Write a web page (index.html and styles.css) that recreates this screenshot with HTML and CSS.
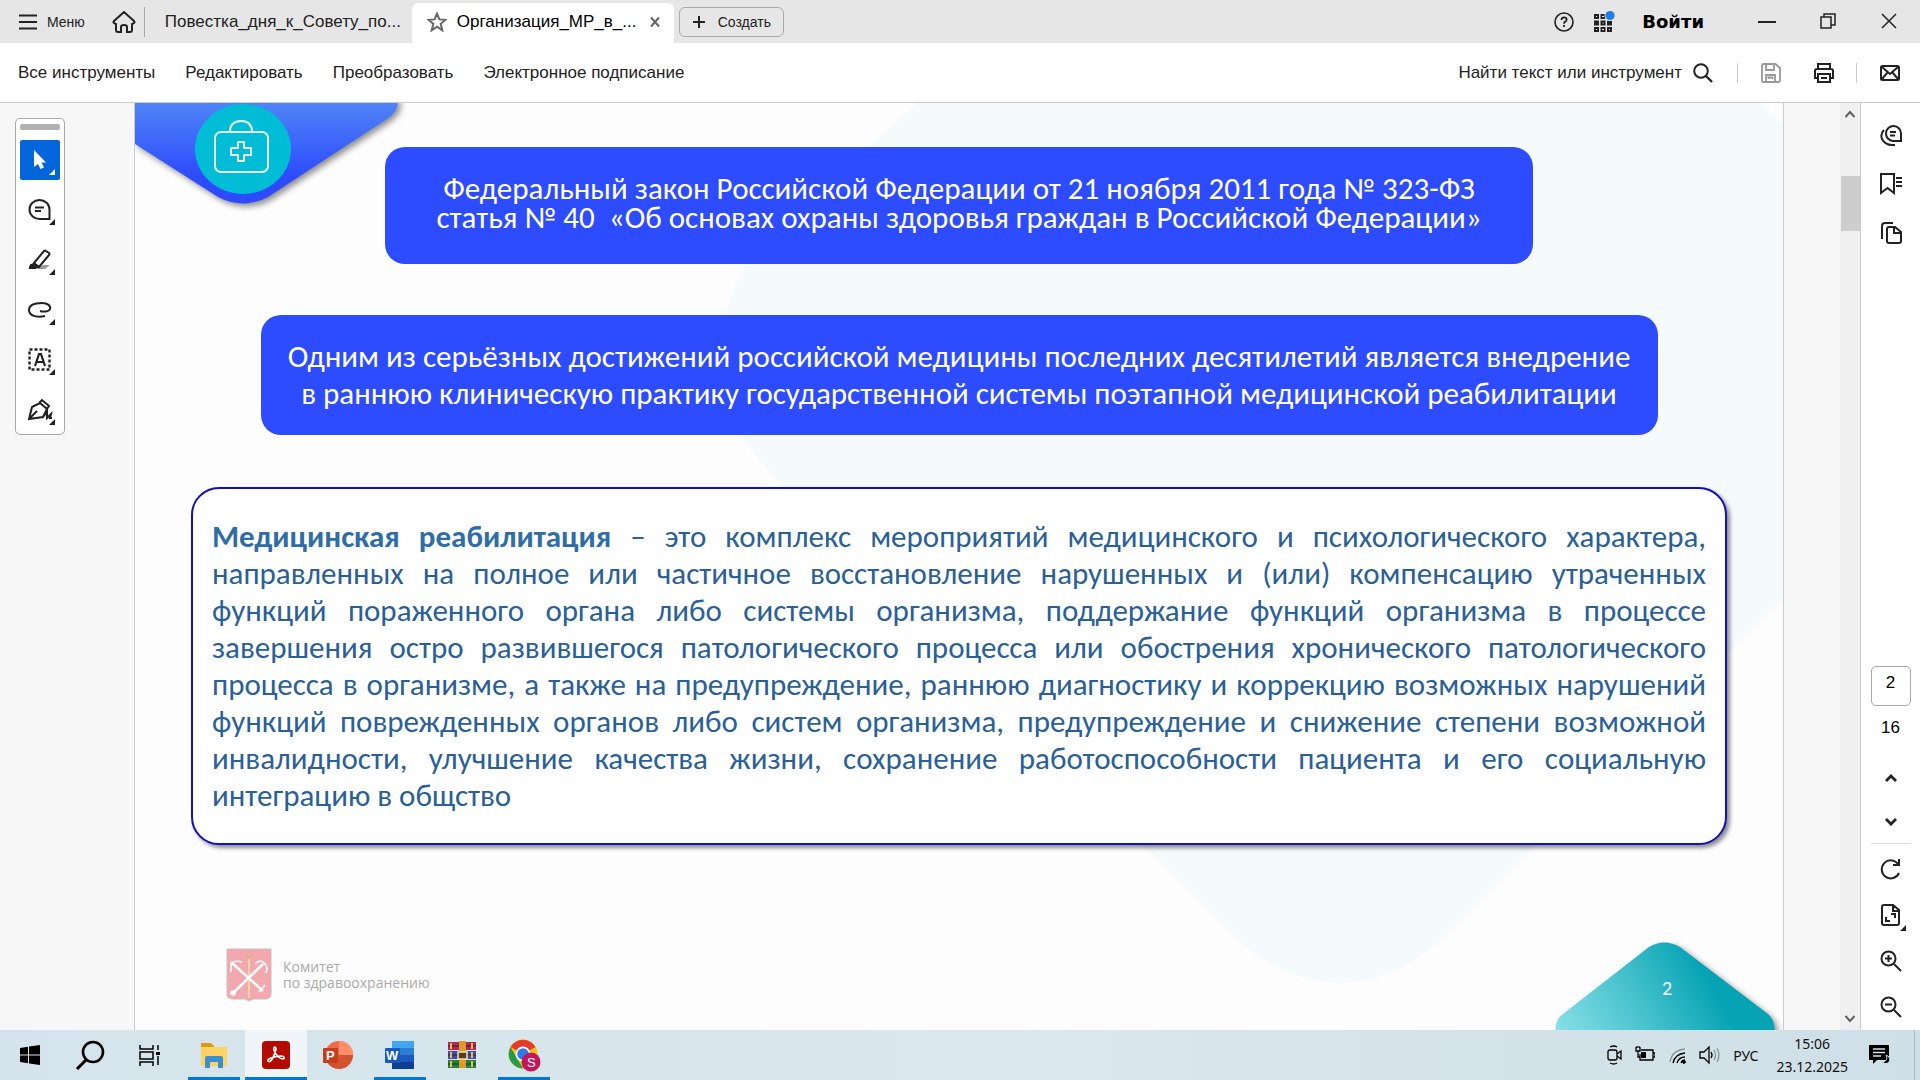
FILE: index.html
```html
<!DOCTYPE html>
<html lang="ru">
<head>
<meta charset="utf-8">
<title>Организация_МР_в_...</title>
<link rel="stylesheet" href="styles.css">
</head>
<body>
<header class="tabbar">
  <button class="menu-btn"><svg class="i18" viewBox="0 0 18 18"><path d="M0 2.500h18M0 9h18M0 15.500h18" stroke-width="2"/></svg>Меню</button>
  <button class="home-btn" aria-label="Главная"><svg class="i24" viewBox="0 0 24 24"><path d="M12 2 2 11q-1 1 0 2l2 1v6q0 2 2 2h3v-5q0-2 3-2t3 2v5h3q2 0 2-2v-6l2-1q1-1 0-2z" stroke-width="2"/></svg></button>
  <a class="tab" href="#agenda">Повестка_дня_к_Совету_по...</a>
  <div class="tab tab-active"><svg class="i20 star" viewBox="0 0 20 20"><path d="m10 1.500 2.300 5.900 6.200.4-4.800 4 1.600 6.500L10 14.700l-5.300 3.600 1.600-6.500-4.800-4 6.200-.4z" stroke-width="2"/></svg><span>Организация_МР_в_...</span><button class="tab-close" aria-label="Закрыть вкладку"><svg class="i12" viewBox="0 0 12 12"><path d="m2 1.500 8 9m0-9-8 9" stroke-width="2"/></svg></button></div>
  <button class="create-btn"><svg class="i14" viewBox="0 0 14 14"><path d="M7 1v12M1 7h12" stroke-width="2"/></svg>Создать</button>
  <div class="window-tools">
    <button aria-label="Справка"><svg class="i20" viewBox="0 0 20 20"><circle cx="10" cy="10" r="9" stroke-width="1.600"/><path d="M7.500 8q0-2.600 2.600-2.600t2.500 2.300q0 1.500-1.600 2.200-1 .5-1 1.800M10 13v2" stroke-width="1.800"/></svg></button>
    <button aria-label="Приложения"><svg class="i24" viewBox="0 0 24 24"><g stroke-width="2"><rect x="3" y="5" width="3" height="3"/><rect x="9.500" y="5" width="3" height="3"/><rect x="3" y="11.500" width="3" height="3"/><rect x="9.500" y="11.500" width="3" height="3"/><rect x="16" y="11.500" width="3" height="3"/><rect x="3" y="18" width="3" height="3"/><rect x="9.500" y="18" width="3" height="3"/><rect x="16" y="18" width="3" height="3"/></g><circle cx="18" cy="5.500" r="5.500" fill="#e6e6e6" stroke="none"/><circle cx="18" cy="5.500" r="4.600" fill="#1f7fe8" stroke="none"/></svg></button>
    <button class="signin">Войти</button>
  </div>
  <div class="window-controls">
    <button aria-label="Свернуть"><svg class="i18" viewBox="0 0 18 18"><path d="M0 10h18" stroke-width="2"/></svg></button>
    <button aria-label="Восстановить"><svg class="i18" viewBox="0 0 18 18"><path d="M2 5h10v11H2zM5 5V2h11v11h-4" stroke-width="1.500"/></svg></button>
    <button aria-label="Закрыть"><svg class="i18" viewBox="0 0 18 18"><path d="m2 2 14 14M16 2 2 16" stroke-width="1.500"/></svg></button>
  </div>
</header>

<nav class="toolbar">
  <a href="#tools">Все инструменты</a>
  <a href="#edit">Редактировать</a>
  <a href="#convert">Преобразовать</a>
  <a href="#sign">Электронное подписание</a>
  <button class="find">Найти текст или инструмент <svg class="i20" viewBox="0 0 20 20"><circle cx="8" cy="8" r="6.800" stroke-width="2"/><path d="m13 13 6 6" stroke-width="2.400"/></svg></button>
  <div class="file-tools">
    <button class="muted" aria-label="Сохранить"><svg class="i20" viewBox="0 0 20 20"><path d="M2.500 1h12L19 5v12.500q0 1.500-1.500 1.500h-15Q1 19 1 17.500v-15Q1 1 2.500 1zM5 1v6h8V1M5 19v-7h9v7M7.500 16v-1.500h4V16" stroke-width="1.800"/></svg></button>
    <button aria-label="Печать"><svg class="i22" viewBox="0 0 22 22"><path d="M5 7V2h12v5M5 16H2V9q0-2 2-2h14q2 0 2 2v7h-3M5 12h12v8H5zM8 16h6" stroke-width="2"/></svg></button>
    <button aria-label="Отправить"><svg class="i22" viewBox="0 0 22 22"><rect x="2" y="4" width="18" height="14" rx="1.500" stroke-width="2"/><path d="m3 5 8 7 8-7M3 17l5.500-6.500M19 17l-5.500-6.500" stroke-width="2"/></svg></button>
  </div>
</nav>

<main class="workspace">
  <aside class="left-pane">
    <div class="palette">
      <span class="grip"></span>
      <button class="tool tool-on" aria-label="Выбор"><svg class="i40" viewBox="0 0 40 40"><path d="M14 10v17l4-3 2.500 5 3.500-1.500-2.500-5H26z" fill="#fff" stroke="none"/><path d="M35 29v6h-6z" fill="#fff" stroke="none"/></svg></button>
      <button class="tool" aria-label="Комментарий"><svg class="i40" viewBox="0 0 40 40"><path d="M29.500 29H19.500a10 9.500 0 1 1 10-9.500zM15 17.500h9M15 21h6" stroke-width="2"/><path class="corner" d="M35 29v6h-6z"/></svg></button>
      <button class="tool" aria-label="Выделение"><svg class="i40" viewBox="0 0 40 40"><path d="M17 29h8l5-4h-7z" fill="#999" stroke="none"/><path d="m14 23 10-12q1-1 2 0l3 2q1 1 0 2L19 27zM14 24l4 3-3 1h-5l1-3z" stroke-width="2"/><path class="corner" d="M9 29q0-5 4-5l4 3-2 2zM35 29v6h-6z"/></svg></button>
      <button class="tool" aria-label="Рисование"><svg class="i40" viewBox="0 0 40 40"><path d="M25 26c-10 2-16-1-16-6 0-6 8-7 13-7 6 0 9 3 8 6s-7 3-10 2" stroke-width="2"/><path class="corner" d="M35 29v6h-6z"/></svg></button>
      <button class="tool" aria-label="Текст"><svg class="i40" viewBox="0 0 40 40"><rect x="9.500" y="9.500" width="20" height="20" stroke-width="2.400" stroke-dasharray="3 2"/><path d="m15 26 4-12h2l4 12M16 22h8" stroke-width="2.200"/><path class="corner" d="M35 29v6h-6z"/></svg></button>
      <button class="tool" aria-label="Подпись"><svg class="i40" viewBox="0 0 40 40"><path d="m9 29 3-12 8-4 7 6-4 8zm0 0 8-8M19 13l3-3 7 6-2 3M22 28l5-6v6l4-4-1 4h2" stroke-width="2"/><path class="corner" d="M35 29v6h-6z"/></svg></button>
    </div>
  </aside>

  <article class="slide">
    <svg class="backdrop" viewBox="0 0 1648 927" preserveAspectRatio="xMidYMin slice" aria-hidden="true"><path d="M782 0 L625 141 Q560 225 606 332 Q618 353 649 383 L1108 842 Q1205 918 1301 842 L1648 495 V22 L1627 0Z" fill="#f5fafd"/></svg>
    <svg class="badge" viewBox="0 0 280 115" aria-hidden="true">
      <defs><linearGradient id="blue" x2="0" y2="1"><stop stop-color="#5086f6"/><stop offset=".75" stop-color="#2d4bfd"/></linearGradient></defs>
      <path class="shadowed" d="M0-4H263Q264 8 252 16L133 94Q108 107 83 94L0 41Z" fill="url(#blue)"/>
      <ellipse cx="108" cy="46" rx="48" ry="45" fill="#00bcd4"/>
      <g fill="none" stroke="#e6faff" stroke-width="2"><rect x="80" y="29" width="53" height="40" rx="6"/><path d="M95 29q0-11 11-11t11 11M103 39h6v6h7v7h-7v6h-6v-6h-7v-7h7z"/></g>
    </svg>

    <div class="cards">
      <h1 class="card law">Федеральный закон Российской Федерации от 21 ноября 2011 года № 323-ФЗ<br>статья № 40 &nbsp;«Об основах охраны здоровья граждан в Российской Федерации»</h1>
      <p class="card achievement">Одним из серьёзных достижений российской медицины последних десятилетий является внедрение<br>в раннюю клиническую практику государственной системы поэтапной медицинской реабилитации</p>
      <p class="definition">
        <span><b>Медицинская реабилитация</b> – это комплекс мероприятий медицинского и психологического характера,</span>
        <span>направленных на полное или частичное восстановление нарушенных и (или) компенсацию утраченных</span>
        <span>функций пораженного органа либо системы организма, поддержание функций организма в процессе</span>
        <span>завершения остро развившегося патологического процесса или обострения хронического патологического</span>
        <span>процесса в организме, а также на предупреждение, раннюю диагностику и коррекцию возможных нарушений</span>
        <span>функций поврежденных органов либо систем организма, предупреждение и снижение степени возможной</span>
        <span>инвалидности, улучшение качества жизни, сохранение работоспособности пациента и его социальную</span>
        <span>интеграцию в общство</span>
      </p>
    </div>

    <footer class="slide-foot">
      <div class="committee">
        <svg class="arms" viewBox="0 0 46 54" aria-hidden="true"><path d="M1 1h44v45q0 4-5 5H27l-4 2-4-2H6q-5-1-5-5z" fill="#f3a8b0" stroke="#cbbcbc"/><path d="M23 8v42" stroke="#f0d9a0" stroke-width="2"/><path d="m19 6 4 4 4-4" fill="none" stroke="#d8b589" stroke-width="2"/><g fill="none" stroke="#fff" stroke-width="2.500"><path d="M7 45 37 16M5 14l32 29"/><path d="M29 16q6-6 10 0t0 9M16 14q-8-2-11 2v8M33 44l6-7" stroke-width="1.500"/><circle cx="7" cy="45" r="1.500"/></g></svg>
        <p>Комитет<br>по здравоохранению</p>
      </div>
      <div class="page-mark">
        <svg viewBox="0 0 228 88" aria-hidden="true"><defs><linearGradient id="teal" gradientUnits="userSpaceOnUse" x1="10" y1="110" x2="150" y2="30"><stop stop-color="#8ae0e8"/><stop offset=".55" stop-color="#45c1cc"/><stop offset="1" stop-color="#06a3b4"/></linearGradient></defs><path class="shadowed" d="M1 92Q-1 78 8 72L94 5Q109-4 125 5L213 72Q221 79 219 92Z" fill="url(#teal)"/></svg>
        <span>2</span>
      </div>
    </footer>
  </article>

  <div class="scrollbar">
    <svg class="i12" viewBox="0 0 12 12"><path d="m1.500 9 4.500-5 4.500 5" stroke-width="2"/></svg>
    <span class="thumb"></span>
    <svg class="i12" viewBox="0 0 12 12"><path d="m1.500 3 4.500 5 4.500-5" stroke-width="2"/></svg>
  </div>

  <aside class="right-rail">
    <div class="panels">
      <button aria-label="Комментарии"><svg class="i24" viewBox="0 0 24 24"><path d="M22 18h-8a7.500 7.500 0 1 1 8-7.500zM11 9h6M11 12.500h5M5 7q-4 4-2 9 3 6 10 6h3" stroke-width="2"/></svg></button>
      <button aria-label="Закладки"><svg class="i24" viewBox="0 0 24 24"><path d="M2 2h13v19l-6.500-5L2 21zM17 6h6M17 10h6M17 14h6" stroke-width="2"/></svg></button>
      <button aria-label="Страницы"><svg class="i24" viewBox="0 0 24 24"><path d="M10 6h6l6 5v9q0 2-2 2H10q-2 0-2-2V8q0-2 2-2zM15 6v6h7M3 18V5q0-3 3-3h8" stroke-width="2"/></svg></button>
    </div>
    <div class="paging">
      <input class="page-input" aria-label="Страница" value="2">
      <span class="page-total">16</span>
      <button aria-label="Предыдущая"><svg class="i14" viewBox="0 0 14 14"><path d="m2 10 5-5 5 5" stroke-width="2.800"/></svg></button>
      <button aria-label="Следующая"><svg class="i14" viewBox="0 0 14 14"><path d="m2 4 5 5 5-5" stroke-width="2.800"/></svg></button>
    </div>
    <div class="zooming">
      <button aria-label="Повернуть"><svg class="i24" viewBox="0 0 24 24"><path d="M20 16a9 9 0 1 1-1-9M20 2v6h-6" stroke-width="2"/></svg></button>
      <button aria-label="По размеру"><svg class="i24 spill" viewBox="0 0 24 24"><path d="M5 2h9l6 5v13q0 2-2 2H5q-2 0-2-2V4q0-2 2-2zM14 2v6h6M12 11h4v4M7 14v4h4" stroke-width="2"/><path class="corner" d="M27 22v6h-6z"/></svg></button>
      <button aria-label="Увеличить"><svg class="i24" viewBox="0 0 24 24"><circle cx="9.500" cy="9.500" r="7" stroke-width="2"/><path d="m15 15 7 7M9.500 6v7M6 9.500h7" stroke-width="2"/></svg></button>
      <button aria-label="Уменьшить"><svg class="i24" viewBox="0 0 24 24"><circle cx="9.500" cy="9.500" r="7" stroke-width="2"/><path d="m15 15 7 7M6 9.500h7" stroke-width="2"/></svg></button>
    </div>
  </aside>
</main>

<footer class="taskbar">
  <button class="sys" aria-label="Пуск"><svg class="i20" viewBox="0 0 20 20"><path d="M0 3l8-1.200V9.500H0zM9 1.600 20 0v9.500H9zM0 10.500h8v7.700L0 17zM9 10.500h11V20L9 18.400z" fill="#000" stroke="none"/></svg></button>
  <button class="sys" aria-label="Поиск"><svg class="i30" viewBox="0 0 30 30"><circle cx="18" cy="12" r="10" stroke="#000" stroke-width="2.600"/><path d="m11 20-9 9" stroke="#000" stroke-width="3"/></svg></button>
  <button class="sys" aria-label="Представление задач"><svg class="i22" viewBox="0 0 22 22"><path d="M1 1v4h13V1M1 8h13v7H1zM1 22v-4h13v4M19 1v5M19 12v9" stroke="#000" stroke-width="1.500"/><path d="M17 8h4v3h-4z" fill="#000" stroke="none"/></svg></button>
  <button class="app running" aria-label="Проводник"><svg class="i30 flat" viewBox="0 0 30 30"><path d="M2 3h10l3 3v6H2z" fill="#d99a16"/><path d="M2 7h26v19H2z" fill="#fed361"/><path d="M6 28V18q0-2 2-2h14q2 0 2 2v10h-5v-6h-8v6z" fill="#3b8fd0"/></svg></button>
  <button class="app running current" aria-label="Acrobat"><svg class="i30" viewBox="0 0 30 30"><rect x="1" y="1" width="28" height="28" rx="4" fill="#b30b00" stroke="none"/><path d="M7 21c3 3 7-7 8-12 0-3-3-2-2 1 2 6 6 9 9 9 2 0 2-3-2-3-5 0-15 3-13 5z" stroke="#fff" stroke-width="1.600"/></svg></button>
  <button class="app" aria-label="PowerPoint"><svg class="i30 flat" viewBox="0 0 30 30"><circle cx="16" cy="15" r="14" fill="#ed6c47"/><path d="M16 1a14 14 0 0 1 14 14H16z" fill="#ff8f6b"/><path d="M30 15a14 14 0 0 1-26 7l12-7z" fill="#d35230"/><rect y="8" width="15" height="15" rx="1" fill="#c43e1c"/><text x="3" y="20">P</text></svg></button>
  <button class="app running" aria-label="Word"><svg class="i30 flat" viewBox="0 0 30 30"><path d="M7 1h22v7H7z" fill="#41a5ee"/><path d="M7 8h22v7H7z" fill="#2b7cd3"/><path d="M7 15h22v7H7z" fill="#185abd"/><path d="M7 22h22v7H7z" fill="#103f91"/><rect y="8" width="15" height="15" rx="1" fill="#185abd"/><text x="1" y="20">W</text></svg></button>
  <button class="app" aria-label="WinRAR"><svg class="i30 flat" viewBox="0 0 30 30"><path d="M1 2h28v8H1z" fill="#b52650"/><path d="M1 11h28v8H1z" fill="#4548b5"/><path d="M1 20h28v8H1z" fill="#238335"/><path d="M1 6h28M1 15h28M1 24h28" stroke="#1b2a38" stroke-width="1"/><path d="M4 3v6M4 12v6M4 21v6M25 3v6M25 12v6M25 21v6" stroke="#e8c04b" stroke-width="2"/><path d="M12 1h7v27h-7z" fill="#dc9a28"/><rect x="11" y="12" width="9" height="7" fill="#5b3b20" stroke="#f4e4b0" stroke-width="1.500"/></svg></button>
  <button class="app running" aria-label="Chrome"><svg class="i34 flat" viewBox="0 0 34 34"><circle cx="16" cy="16" r="14.500" fill="#fbc116"/><path d="M16 16 3.500 9a14.500 14.500 0 0 1 25 0z" fill="#e33b2e"/><path d="M3.500 9 16 30.500A14.500 14.500 0 0 1 3.500 9z" fill="#269b4b"/><circle cx="16" cy="16" r="7.500" fill="#fff"/><circle cx="16" cy="16" r="5.800" fill="#3079e8"/><circle cx="24" cy="24" r="9.500" fill="#c2185b"/><text class="avatar" x="20" y="29">S</text></svg></button>
  <div class="tray">
    <svg class="i20" viewBox="0 0 20 20"><rect x="5" y="5" width="9" height="10" rx="2" stroke-width="1.300"/><path d="m14 9 4-3v8l-4-3M7 2q4-2 7 0M7 18q4 2 7 0" stroke-width="1.300"/></svg>
    <svg class="i20" viewBox="0 0 20 20"><path d="M6 5h12v10H5V9M18 8h2v4h-2M1 2v4h4V2M2 1v2m2-2v2M3 6v6h2" stroke-width="1.300"/><path d="M6 7h5v6H6z" fill="#000" stroke="none"/></svg>
    <svg class="i20" viewBox="0 0 20 20"><path d="M3 17Q5 5 18 4" stroke="#87939a" stroke-width="1.300"/><path d="M6 18Q8 9 18 8M10 18q2-6 8-6M14 18q1-3 4-3" stroke-width="1.300"/><circle cx="17" cy="17" r="1.400" fill="#000"/></svg>
    <svg class="i22" viewBox="0 0 22 22"><path d="M1 8h4l5-5v16l-5-5H1zM12 8q2 3 0 6" stroke-width="1.300"/><path d="M15 6q3 5 0 10M18 4q4 7 0 14" stroke="#87939a" stroke-width="1.300"/></svg>
    <span class="lang">РУС</span>
    <time class="clock" datetime="2025-12-23T15:06">15:06<br>23.12.2025</time>
    <svg class="i22" viewBox="0 0 22 22"><path d="M1 1h20v15H9l-4 4v-4H1z" fill="#000" stroke="none"/><path d="M5 5h12M5 8.500h12M5 12h8" stroke="#d3e2ea" stroke-width="1.500"/><path d="M18 11q3 6-4 7 6 4 8-2 0-4-4-5z" fill="#000" stroke="#d3e2ea"/></svg>
  </div>
</footer>
</body>
</html>
```
FILE: styles.css
```css
* { box-sizing: border-box; }
body {
  margin: 0;
  min-height: 100vh;
  display: flex;
  flex-direction: column;
  font: 17px/20px "Liberation Sans", Arial, sans-serif;
  color: #222;
  background: #fff;
}
button {
  display: flex;
  align-items: center;
  justify-content: center;
  padding: 0;
  border: 0;
  background: none;
  color: inherit;
  font: inherit;
}
a { color: inherit; text-decoration: none; }
p, h1 { margin: 0; }
svg { display: block; flex: none; fill: none; stroke: #222; }
.flat { stroke: none; }
.spill { overflow: visible; }
.i12 { width: 12px; height: 12px; }
.i14 { width: 14px; height: 14px; }
.i18 { width: 18px; height: 18px; }
.i20 { width: 20px; height: 20px; }
.i22 { width: 22px; height: 22px; }
.i24 { width: 24px; height: 24px; }
.i30 { width: 30px; height: 30px; }
.i34 { width: 34px; height: 34px; }
.i40 { width: 40px; height: 40px; }

/* Tabs */
.tabbar { display: flex; align-items: center; height: 43px; padding-left: 19px; background: #e6e6e6; }
.menu-btn { gap: 10px; font-size: 14px; }
.home-btn { width: 60px; height: 30px; padding-left: 20px; border-right: 1px solid #aaa; }
.tab { width: 267px; padding-left: 20px; white-space: nowrap; }
.tab-active {
  display: flex;
  align-items: center;
  align-self: stretch;
  gap: 10px;
  width: 262px;
  margin-top: 3px;
  padding: 0 13px 2px 15px;
  border-radius: 6px 6px 0 0;
  background: #fff;
  color: #000;
}
.star, .tab-close svg { stroke: #666; }
.tab-close { margin-left: auto; }
.create-btn { gap: 12px; width: 105px; height: 30px; margin-left: 5px; border: 1px solid #aaa; border-radius: 6px; font-size: 14px; }
.window-tools { display: flex; align-items: center; gap: 18px; margin-left: auto; }
.signin { margin-left: 8px; font: bold 18px/20px "DejaVu Sans", Verdana, sans-serif; color: #000; }
.window-controls { display: flex; gap: 43px; margin: 0 22px 2px 54px; }

/* Toolbar */
.toolbar { display: flex; align-items: center; gap: 30px; height: 60px; padding: 0 20px 0 18px; border-bottom: 1px solid #ccc; }
.find { gap: 11px; margin-left: auto; white-space: nowrap; }
.file-tools { display: flex; align-items: center; gap: 33px; margin-left: -6px; }
.file-tools button:first-child { width: 43px; height: 20px; padding-left: 23px; border-left: 1px solid #ccc; }
.file-tools button:last-child { width: 44px; height: 20px; margin-left: -12px; padding-left: 22px; border-left: 1px solid #ccc; }
.muted svg { stroke: #999; }

/* Workspace */
.workspace { display: flex; flex: 1; background: #f7f7f7; }
.left-pane { flex: none; width: 134px; padding: 15px; }
.palette {
  display: flex;
  flex-direction: column;
  align-items: center;
  gap: 10px;
  width: 50px;
  padding: 5px 4px 4px;
  border: 1px solid #aaa;
  border-radius: 5px;
  background: #fff;
}
.grip { width: 40px; height: 6px; border-radius: 2px; background: #b1b1b1; }
.tool-on { border-radius: 2px; background: #0265dc; }
.corner { fill: #222; stroke: none; }

/* Slide */
.slide {
  position: relative;
  display: flex;
  flex: 1;
  flex-direction: column;
  margin-right: 56px;
  padding-top: 44px;
  border: solid #ccc;
  border-width: 0 1px;
  background: #fdfdfd;
  font-family: Carlito, Calibri, Lato, sans-serif;
}
.backdrop { position: absolute; inset: 0; width: 100%; height: 100%; stroke: none; }
.badge { position: absolute; top: 0; left: 0; width: 280px; height: 115px; stroke: none; }
.shadowed { filter: drop-shadow(3px 3px 3px rgb(0 0 0 / 45%)); stroke: none; }
.cards { position: relative; display: flex; flex-direction: column; align-items: center; padding: 0 56px; }
.card { width: 100%; border-radius: 20px; background: #2d4bff; color: #fff; font-weight: 400; text-align: center; white-space: nowrap; }
.law { max-width: 1148px; margin-bottom: 51px; padding: 27px 0 32px; font-size: 31px; line-height: 29px; }
.achievement { max-width: 1397px; margin-bottom: 52px; padding: 23px 0; font-size: 31px; line-height: 37px; }
.definition {
  width: 100%;
  max-width: 1536px;
  padding: 29px 19px;
  border: 2px solid #1212b8;
  border-radius: 28px;
  background: #fff;
  box-shadow: 3px 3px 4px rgb(0 0 0 / 45%);
  color: #2a6099;
  font-size: 31px;
  line-height: 37px;
}
.definition span { display: block; text-align-last: justify; white-space: nowrap; }
.definition span:last-child { text-align-last: left; }
.definition b { color: #2e6da8; }
.slide-foot { position: relative; display: flex; align-items: flex-end; justify-content: space-between; margin-top: auto; padding-left: 90px; }
.committee { display: flex; align-items: center; gap: 10px; margin-bottom: 28px; color: #aaa; font: 14px/16px "Open Sans", sans-serif; }
.arms { width: 48px; height: 54px; }
.page-mark { position: relative; width: 228px; height: 88px; overflow: hidden; }
.page-mark span { position: absolute; top: 34px; left: 107px; color: #fff; font-size: 20px; line-height: 24px; }

/* Scrollbar and rail */
.scrollbar { display: flex; flex-direction: column; align-items: center; width: 21px; padding: 5px 0; border-right: 1px solid #ccc; background: #f0f0f0; }
.scrollbar svg { stroke: #606060; }
.thumb { width: 19px; height: 55px; margin: 56px 0 auto; background: #cdcdcd; }
.right-rail { display: flex; flex-direction: column; align-items: center; width: 59px; padding: 20px 0 11px; background: #fff; }
.panels { display: flex; flex-direction: column; gap: 25px; }
.paging { display: flex; flex-direction: column; align-items: center; margin-top: auto; padding-bottom: 14px; border-bottom: 1px solid #ddd; color: #000; }
.page-input { width: 40px; height: 40px; padding: 0 0 6px; border: 1px solid #aaa; border-radius: 5px; background: #fff; color: #000; font: inherit; text-align: center; }
.page-total { margin: 12px 0 33px; }
.paging button + button { margin-top: 30px; }
.zooming { display: flex; flex-direction: column; gap: 22px; padding-top: 13px; }

/* Taskbar */
.taskbar { display: flex; height: 50px; background: linear-gradient(90deg, #d5e4ec, #dae7ec 55%, #cfdfe7); color: #111; }
.sys { width: 60px; }
.sys:nth-child(3) { margin-right: 3px; }
.app { position: relative; width: 62px; }
.app text { fill: #fff; font: bold 13px "Liberation Sans", sans-serif; }
.app .avatar { font-weight: 400; }
.current { background: #f0f5fa; }
.running::after { content: ""; position: absolute; right: 5px; bottom: 0; left: 5px; height: 3px; background: #0078d4; }
.current::after { right: 0; left: 0; }
.tray { display: flex; align-items: center; gap: 12px; margin: 0 5px 0 auto; padding-right: 24px; border-right: 1px solid #a9b8c0; font: 14px/23px "Noto Sans", sans-serif; white-space: nowrap; }
.tray svg { stroke: #000; }
.clock { margin: 0 8px 0 6px; text-align: center; }
```
